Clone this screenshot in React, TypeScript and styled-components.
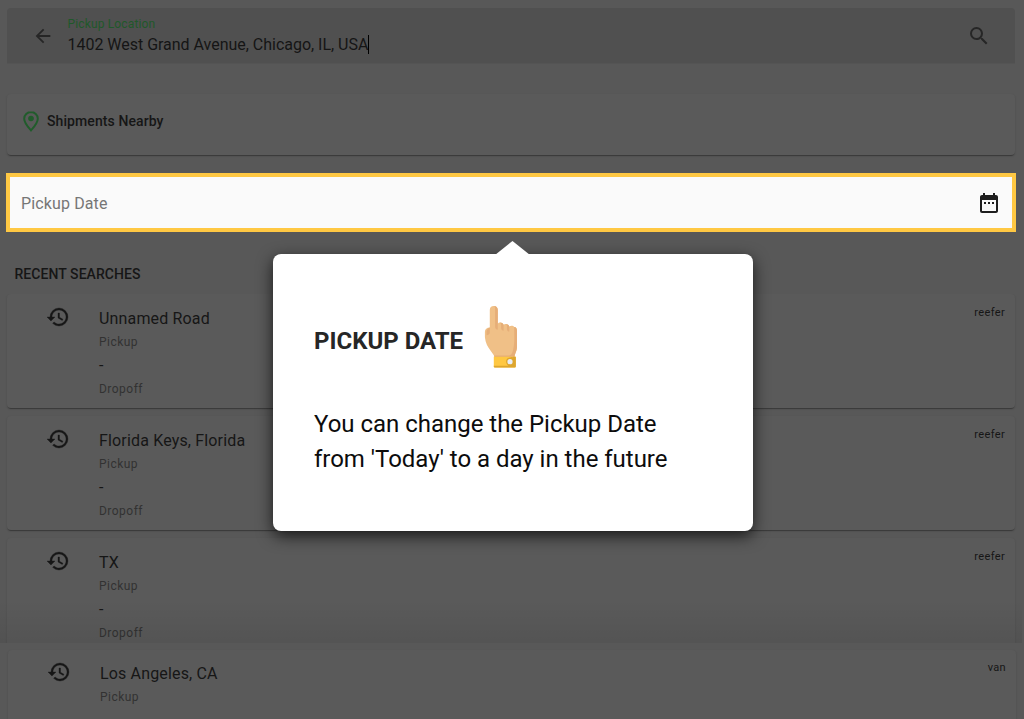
import React from "react";
import styled, { createGlobalStyle } from "styled-components";
import { MdArrowBack, MdDateRange, MdHistory, MdSearch } from "react-icons/md";

const GlobalStyle = createGlobalStyle`
  * { box-sizing: border-box; }
  body {
    margin: 0;
    background: #585858;
    font-family: Roboto, "Liberation Sans", sans-serif;
    color: #161616;
  }
`;

const Page = styled.main`
  position: relative;
  display: flex;
  flex-direction: column;
  width: 1024px;
  height: 719px;
  overflow: hidden;
  background: #585858;
`;

const SearchBar = styled.header`
  display: flex;
  align-items: center;
  flex: none;
  height: 56px;
  margin: 8px 9px 0 7px;
  padding: 0 24px 0 25px;
  border-radius: 4px 4px 0 0;
  background: #505050;
  border-bottom: 1px solid #545454;
  color: #262626;
`;

const SearchField = styled.div`
  display: flex;
  flex-direction: column;
  flex: 1;
  padding: 3px 0 0 13.5px;
`;

const FieldLabel = styled.span`
  font-size: 12px;
  line-height: 14px;
  letter-spacing: 0.15px;
  color: #20582a;
`;

const FieldValue = styled.span`
  display: flex;
  align-items: center;
  height: 27px;
  font-size: 16px;
  letter-spacing: -0.02px;
  color: #151515;
`;

const Caret = styled.i`
  width: 1px;
  height: 19px;
  background: #000;
`;

const Card = styled.section`
  flex: none;
  border-radius: 4px;
  background: #5a5a5a;
  box-shadow: 0 2px 1px -1px rgba(0, 0, 0, 0.22), 0 1px 1px rgba(0, 0, 0, 0.12),
    0 1px 3px rgba(0, 0, 0, 0.08);
`;

const NearbyCard = styled(Card)`
  display: flex;
  align-items: flex-start;
  gap: 8px;
  height: 61px;
  margin: 30px 9px 0 7px;
  padding: 17px 16px 16px;
`;

const NearbyTitle = styled.span`
  font-size: 14px;
  font-weight: 500;
  line-height: 20px;
  letter-spacing: 0.09px;
`;

const DateField = styled.section`
  display: flex;
  align-items: center;
  justify-content: space-between;
  flex: none;
  height: 59px;
  margin: 18px 8px 0 6px;
  padding: 0 11px;
  border: 4px solid #ffc843;
  background: #fafafa;
  color: #1e1e1e;
`;

const Placeholder = styled.span`
  padding-top: 1px;
  font-size: 16px;
  letter-spacing: 0.13px;
  color: #767676;
`;

const SectionTitle = styled.h2`
  flex: none;
  margin: 33px 0 10px 14.5px;
  font-size: 14px;
  font-weight: 500;
  line-height: 19px;
  letter-spacing: 0.06px;
`;

const RecentList = styled.div`
  display: flex;
  flex-direction: column;
  flex: none;
  gap: 8px;
  height: 349px;
  padding: 0 9px 0 7px;
  overflow: hidden;
`;

const BottomShade = styled.div`
  flex: none;
  height: 43px;
  margin: -43px 2px 0 0;
  background: linear-gradient(rgba(0, 0, 0, 0), rgba(0, 0, 0, 0.07));
`;

const NextList = styled.div`
  flex: none;
  padding: 6.5px 8px 0 8px;
`;

const SearchCard = styled(Card)`
  display: flex;
  height: 114px;
  padding: 10.5px 10px 0 39px;
`;

const RecentIcon = styled(MdHistory)`
  flex: none;

  path:not([fill="none"]) {
    stroke: currentColor;
    stroke-width: 0.35px;
  }
`;

const Route = styled.div`
  display: flex;
  flex-direction: column;
  flex: 1;
  padding: 2px 0 0 29px;
`;

const Place = styled.span`
  height: 24px;
  font-size: 16px;
  line-height: 24px;
  letter-spacing: 0.16px;
`;

const Stop = styled.span`
  height: 23px;
  font-size: 12px;
  line-height: 23px;
  letter-spacing: 0.48px;
  color: #323232;
`;

const Equipment = styled.span`
  padding-top: 1px;
  font-size: 11px;
  line-height: 14px;
  letter-spacing: 0.35px;
`;

const Tooltip = styled.aside`
  position: absolute;
  left: 273px;
  top: 254px;
  width: 480px;
  height: 277px;
  padding: 50px 40px 0 41px;
  border-radius: 8px;
  background: #fff;
  box-shadow: 0 5px 16px rgba(0, 0, 0, 0.72);
`;

const TooltipArrow = styled.span`
  position: absolute;
  left: 222px;
  top: -13px;
  width: 35px;
  height: 14px;
  background: #fff;
  clip-path: polygon(50% 0, 100% 100%, 0 100%);
`;

const TooltipHeading = styled.div`
  display: flex;
  align-items: center;
  gap: 21px;
  height: 66px;
`;

const TooltipTitle = styled.h1`
  margin: 7px 0 0;
  font-size: 24px;
  font-weight: 700;
  line-height: 28px;
  color: #262626;
`;

const TooltipText = styled.p`
  margin: 37px 0 0;
  font-size: 24px;
  line-height: 35px;
  letter-spacing: -0.02px;
  color: #0c0c0c;
`;

const PinSvg = styled.svg`
  flex: none;
  color: #205c2b;
`;

const PinIcon = () => (
  <PinSvg width="16" height="21" viewBox="0 0 16 21" fill="none">
    <path
      d="M8 1.1C4.3 1.1 1.2 4 1.2 7.7c0 4.2 6.8 11.7 6.8 11.7s6.8-7.5 6.8-11.7C14.8 4 11.7 1.1 8 1.1z"
      stroke="currentColor"
      strokeWidth="2"
    />
    <circle cx="8" cy="7.5" r="2.8" fill="currentColor" />
  </PinSvg>
);

const HandIcon = () => (
  <svg width="34" height="64" viewBox="-0.5 0.3 34 64">
    <path
      d="M5.3 5.2a4 4 0 0 1 8 0V19c.8-1.9 5-1.9 5.8 1 1.5-1.3 5.2-.6 5.7 1.8 1.7-1.4 4.2-.7 5 .5 1.4-.4 2.7 1 2.7 3.4v16c0 4.7-2.4 7-2.4 11H10C10 48.5 1.5 44 .4 32.5V27c0-2.6 2-4.3 4.900-4.300z"
      fill="#f0c087"
    />
    <path
      d="M32.5 26v15.7c0 4.7-2.4 7-2.4 11H10l-.5-2h15c4 0 4.5-8 5-11.2.6-4.2.2-9.5.2-17.2 1.6 0 2.8 1.5 2.8 3.7z"
      fill="#e6ae78"
    />
    <path
      d="M5.3 22.7v5c0 1.7-1.7 2.8-3.3 2.8v-3.5c0-1.7 1.3-3.3 3.3-4.3zM13.3 19v6c-1.4 0-2.7-1.2-2.7-2.8V4c0-1.4-.4-2.3-1-2.8 2 0 3.7 1.7 3.7 4zM19.1 20v6c-1.4 0-2.5-1.2-2.5-2.8v-3c0-1-.5-2-1.2-2.5 1.6 0 3.2.7 3.7 2.3zM24.8 21.8v5c-1.3 0-2.4-1-2.4-2.6v-2.6c0-1-.5-1.7-1.2-2.2 1.7.1 3.2.8 3.6 2.4z"
      fill="#e6ae78"
    />
    <path d="M9.3 52h22v9.8a1 1 0 0 1-1 1h-20a1 1 0 0 1-1-1z" fill="#ffc843" />
    <path
      d="M28.5 52h2.8v9.8a1 1 0 0 1-1 1h-20a1 1 0 0 1-1-1v-.8h14.5c-3-2-3-7 .5-8 1.7-.7 3.7-.1 4.2-1z"
      fill="#dda62f"
    />
    <circle cx="25.5" cy="57" r="2.6" fill="#e9edf5" />
  </svg>
);

interface RecentSearchProps {
  place: string;
  equipment: string;
  dropoff?: string;
}

const RecentSearch = ({ place, equipment, dropoff }: RecentSearchProps) => (
  <SearchCard>
    <RecentIcon size={24} />
    <Route>
      <Place>{place}</Place>
      <Stop>Pickup</Stop>
      {dropoff && (
        <>
          <Place>{dropoff}</Place>
          <Stop>Dropoff</Stop>
        </>
      )}
    </Route>
    <Equipment>{equipment}</Equipment>
  </SearchCard>
);

export default function App() {
  return (
    <Page>
      <GlobalStyle />
      <SearchBar>
        <MdArrowBack size={22} />
        <SearchField>
          <FieldLabel>Pickup Location</FieldLabel>
          <FieldValue>
            1402 West Grand Avenue, Chicago, IL, USA
            <Caret />
          </FieldValue>
        </SearchField>
        <MdSearch size={24} />
      </SearchBar>
      <NearbyCard>
        <PinIcon />
        <NearbyTitle>Shipments Nearby</NearbyTitle>
      </NearbyCard>
      <DateField>
        <Placeholder>Pickup Date</Placeholder>
        <MdDateRange size={24} />
      </DateField>
      <SectionTitle>RECENT SEARCHES</SectionTitle>
      <RecentList>
        <RecentSearch place="Unnamed Road" equipment="reefer" dropoff="-" />
        <RecentSearch place="Florida Keys, Florida" equipment="reefer" dropoff="-" />
        <RecentSearch place="TX" equipment="reefer" dropoff="-" />
      </RecentList>
      <BottomShade />
      <NextList>
        <RecentSearch place="Los Angeles, CA" equipment="van" />
      </NextList>
      <Tooltip>
        <TooltipArrow />
        <TooltipHeading>
          <TooltipTitle>PICKUP DATE</TooltipTitle>
          <HandIcon />
        </TooltipHeading>
        <TooltipText>
          You can change the Pickup Date
          <br />
          from 'Today' to a day in the future
        </TooltipText>
      </Tooltip>
    </Page>
  );
}
